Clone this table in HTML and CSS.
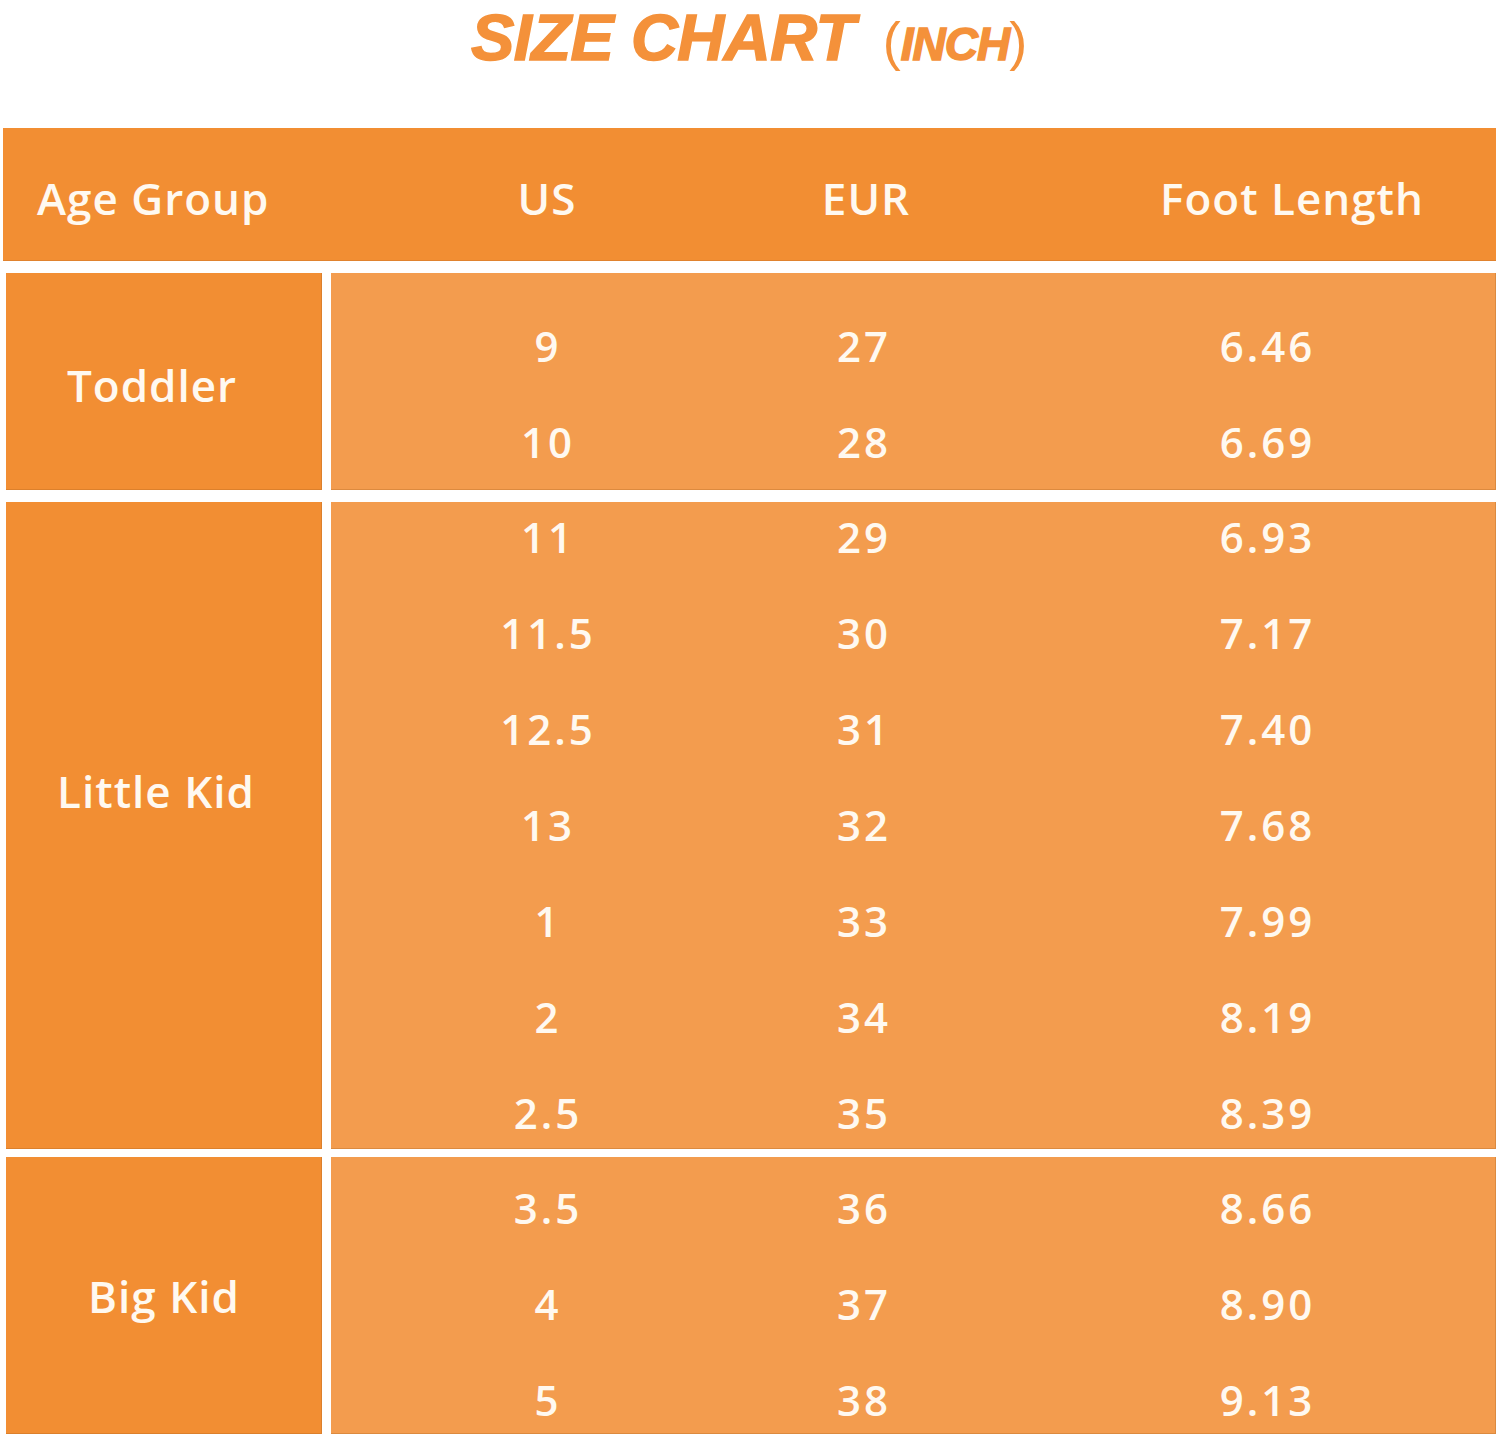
FILE: index.html
```html
<!DOCTYPE html>
<html lang="en">
<head>
<meta charset="utf-8">
<title>Size Chart</title>
<link rel="stylesheet" href="styles.css">
</head>
<body>
<div class="page">
  <h1 class="title"><span class="title-main">SIZE CHART</span><span class="title-sub"><span class="paren">(</span>INCH<span class="paren">)</span></span></h1>

  <div class="chart">
    <div class="head">
      <div class="hcell h-age">Age Group</div>
      <div class="hcell h-us">US</div>
      <div class="hcell h-eur">EUR</div>
      <div class="hcell h-foot">Foot Length</div>
    </div>

    <div class="group g-toddler">
      <div class="label l-toddler">Toddler</div>
      <div class="data">
        <div class="rows">
          <div class="row"><span>9</span><span>27</span><span>6.46</span></div>
          <div class="row"><span>10</span><span>28</span><span>6.69</span></div>
        </div>
      </div>
    </div>

    <div class="group g-little">
      <div class="label l-little">Little Kid</div>
      <div class="data">
        <div class="rows">
          <div class="row"><span>11</span><span>29</span><span>6.93</span></div>
          <div class="row"><span>11.5</span><span>30</span><span>7.17</span></div>
          <div class="row"><span>12.5</span><span>31</span><span>7.40</span></div>
          <div class="row"><span>13</span><span>32</span><span>7.68</span></div>
          <div class="row"><span>1</span><span>33</span><span>7.99</span></div>
          <div class="row"><span>2</span><span>34</span><span>8.19</span></div>
          <div class="row"><span>2.5</span><span>35</span><span>8.39</span></div>
        </div>
      </div>
    </div>

    <div class="group g-big">
      <div class="label l-big">Big Kid</div>
      <div class="data">
        <div class="rows">
          <div class="row"><span>3.5</span><span>36</span><span>8.66</span></div>
          <div class="row"><span>4</span><span>37</span><span>8.90</span></div>
          <div class="row"><span>5</span><span>38</span><span>9.13</span></div>
        </div>
      </div>
    </div>
  </div>
</div>
</body>
</html>
```

FILE: styles.css
```css
* { box-sizing: border-box; }

html, body {
  margin: 0;
  padding: 0;
  background: #ffffff;
}

body {
  font-family: "Open Sans", "Noto Sans", sans-serif;
  color: #fff9f0;
}

.page {
  width: 1500px;
  height: 1441px;
  overflow: hidden;
}

.title {
  margin: 0;
  height: 128px;
  padding: 0 0 0 4px;
  display: flex;
  justify-content: center;
  align-items: baseline;
  gap: 18px;
  color: #f4913a;
  font-family: "Liberation Sans", Arial, sans-serif;
  font-weight: bold;
  font-style: italic;
  line-height: 75px;
  white-space: nowrap;
  -webkit-text-stroke: 1.5px #f4913a;
}

.title-main {
  font-size: 65px;
  letter-spacing: -0.5px;
  padding-right: 10px;
}

.title-sub {
  font-size: 46px;
  letter-spacing: -1px;
  padding-right: 6px;
}

.paren {
  font-weight: normal;
  font-style: normal;
  font-size: 54px;
  letter-spacing: 0;
  -webkit-text-stroke: 0;
}

.chart {
  display: flex;
  flex-direction: column;
}

.head {
  margin: 0 4px 0 3px;
  height: 133px;
  background: #f28e33;
  display: grid;
  grid-template-columns: 328px 432px 198px 1fr;
  align-items: center;
  font-size: 44px;
  font-weight: 600;
  letter-spacing: 1px;
  padding-top: 6px;
  box-shadow: inset 0 -1px 0 rgba(170, 95, 30, 0.25);
}

.hcell { text-align: center; }
.h-age { text-align: left; padding-left: 34px; }
.h-eur { padding-left: 8px; }
.h-foot { padding-left: 127px; }

.group {
  display: grid;
  grid-template-columns: 316px 1165px;
  column-gap: 9px;
  margin-left: 6px;
}

.g-toddler { margin-top: 12px; height: 217px; }
.g-little { margin-top: 12px; height: 647px; }
.g-big { margin-top: 8px; height: 277px; }

.label {
  background: #f28e33;
  display: flex;
  align-items: center;
  justify-content: center;
  font-size: 44px;
  font-weight: 600;
  letter-spacing: 1px;
  box-shadow: inset -1px -1px 0 rgba(170, 95, 30, 0.3);
}

.l-toddler { padding-top: 6px; padding-right: 24px; }
.l-little { padding-bottom: 70px; padding-right: 16px; }
.l-big { padding-top: 0; }

.data {
  background: #f39c4e;
  overflow: hidden;
  box-shadow: inset -1px -1px 0 rgba(170, 95, 30, 0.3);
}

.g-toddler .rows { margin-top: 24px; }
.g-little .rows { margin-top: -14px; }
.g-big .rows { margin-top: 2px; }

.row {
  display: grid;
  grid-template-columns: 434px 198px 1fr;
  height: 96px;
  align-items: center;
  font-size: 42px;
  font-weight: 600;
  letter-spacing: 3px;
  text-align: center;
}

.row span:nth-child(3) { padding-left: 76px; }
```
